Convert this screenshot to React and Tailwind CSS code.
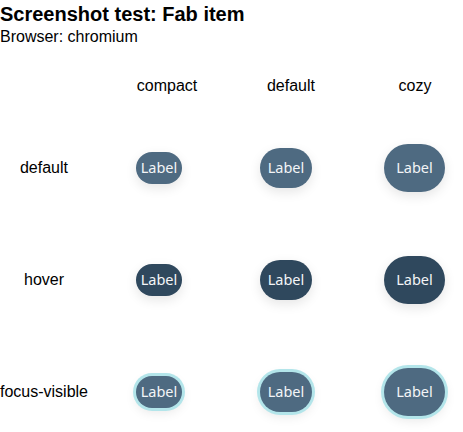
import React from "react";

const sizes = [
  "w-[46px] h-[32px]",
  "w-[52px] h-[40px]",
  "w-[61px] h-[48px]",
];

function Fab({ size, state }) {
  const bg = state === "hover" ? "bg-[#2f485d]" : "bg-[#4e6a81]";
  const shadow =
    state === "focus"
      ? "shadow-[0_0_0_3px_#b3e5ea,0_4px_12px_rgba(0,0,0,0.10)]"
      : "shadow-[0_4px_12px_rgba(0,0,0,0.10)]";
  return (
    <div
      className={`${sizes[size]} ${bg} ${shadow} rounded-full flex items-center justify-center text-[14.5px] text-[#f3f5f7] font-['Noto_Sans',sans-serif]`}
    >
      Label
    </div>
  );
}

const rows = [
  { label: "default", state: "default" },
  { label: "hover", state: "hover" },
  { label: "focus-visible", state: "focus" },
];

export default function App() {
  return (
    <div className="w-full overflow-hidden bg-white text-black font-['Liberation_Sans',Arial,sans-serif]">
      <div className="text-xl font-bold leading-[28px]">Screenshot test: Fab item</div>
      <div className="text-base leading-[18px]">Browser: chromium</div>
      <div className="grid grid-cols-[105px_124px_124px_124px] w-[477px] mt-[28px] h-[24px] items-center text-base">
        <div />
        <div className="text-center">compact</div>
        <div className="text-center">default</div>
        <div className="text-center">cozy</div>
      </div>
      <div className="mt-[14px]">
        {rows.map((r) => (
          <div
            key={r.label}
            className="grid grid-cols-[105px_124px_124px_124px] w-[477px] h-[112px] items-center text-base"
          >
            <div className="w-[88px] flex justify-center whitespace-nowrap">{r.label}</div>
            {[0, 1, 2].map((s) => (
              <div key={s} className="flex justify-start pl-[31px]">
                <Fab size={s} state={r.state} />
              </div>
            ))}
          </div>
        ))}
      </div>
    </div>
  );
}
